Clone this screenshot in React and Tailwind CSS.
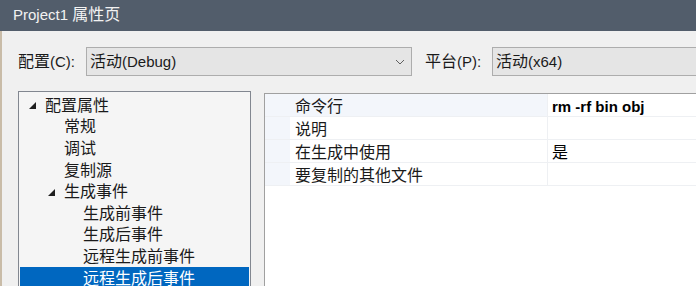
import React from 'react';

// CJK glyphs in the reference render a little larger than the Latin text
const Mix = ({ text }) => {
  const parts = text.split(/([\u3400-\u9fff]+)/).filter(Boolean);
  return (
    <span className="whitespace-pre">
      {parts.map((p, i) =>
        /[\u3400-\u9fff]/.test(p) ? (
          <span key={i} className="text-[16px]">{p}</span>
        ) : (
          <span key={i}>{p}</span>
        )
      )}
    </span>
  );
};

const Expander = () => (
  <svg width="7" height="7" viewBox="0 0 7 7" className="shrink-0">
    <polygon points="7,0 7,7 0,7" fill="#1e1e1e" />
  </svg>
);

const Chevron = () => (
  <svg width="10" height="6" viewBox="0 0 10 6">
    <polyline points="1,1 5,5 9,1" fill="none" stroke="#606060" strokeWidth="1" />
  </svg>
);

const treeItems = [
  { label: '配置属性', level: 0, expander: true },
  { label: '常规', level: 1 },
  { label: '调试', level: 1 },
  { label: '复制源', level: 1 },
  { label: '生成事件', level: 1, expander: true },
  { label: '生成前事件', level: 2 },
  { label: '生成后事件', level: 2 },
  { label: '远程生成前事件', level: 2 },
  { label: '远程生成后事件', level: 2, selected: true },
];

const props = [
  { name: '命令行', value: 'rm -rf bin obj', bold: true, focused: true },
  { name: '说明', value: '' },
  { name: '在生成中使用', value: '是' },
  { name: '要复制的其他文件', value: '' },
];

const indent = ['pl-[9px]', 'pl-[28px]', 'pl-[47px]'];
const textIndent = ['pl-[25px]', 'pl-[44px]', 'pl-[63px]'];

const App = () => {
  return (
    <div
      className="w-[696px] h-[286px] overflow-hidden flex flex-col bg-[#f0f0f0] text-[15px] text-[#1a1a1a]"
      style={{ fontFamily: '"Liberation Sans", "Noto Sans CJK SC", sans-serif' }}
    >
      <div className="h-[31px] shrink-0 bg-[#525d6b] flex items-center pl-[13px] pb-[2px] text-[#f2f2f2] leading-none">
        <Mix text="Project1 属性页" />
      </div>

      <div className="flex flex-1 min-h-0">
        <div className="w-[2px] shrink-0 bg-[#c9bca8]" />

        <div className="flex-1 flex flex-col pl-[16px] pt-[16px] min-w-0">
          <div className="flex items-center h-[29px]">
            <div className="w-[68px] shrink-0 leading-none pt-[1px]">
              <Mix text="配置(C):" />
            </div>
            <div className="w-[326px] h-[29px] shrink-0 border border-[#adadad] bg-[#e5e5e5] flex items-center justify-between pl-[3px] pr-[6px]">
              <span className="leading-none pt-[1px]"><Mix text="活动(Debug)" /></span>
              <Chevron />
            </div>
            <div className="w-[67px] shrink-0 ml-[13px] leading-none pt-[1px]">
              <Mix text="平台(P):" />
            </div>
            <div className="w-[260px] h-[29px] shrink-0 border border-[#adadad] bg-[#e5e5e5] flex items-center pl-[3px]">
              <span className="leading-none pt-[1px]"><Mix text="活动(x64)" /></span>
            </div>
          </div>

          <div className="flex flex-1 mt-[15px] min-h-0">
            <div className="w-[233px] shrink-0 border border-[#828790] border-b-0 bg-[#f5f5f5] pt-[2px] overflow-hidden">
              {treeItems.map((it) => (
                <div
                  key={it.label}
                  className={
                    'h-[21.6px] mx-[1px] flex items-center leading-none pt-[2px] ' +
                    (it.selected ? 'bg-[#0067c0] text-white' : '')
                  }
                >
                  {it.expander ? (
                    <div className={'flex items-center gap-[9px] ' + indent[it.level]}>
                      <Expander />
                      <Mix text={it.label} />
                    </div>
                  ) : (
                    <div className={textIndent[it.level]}>
                      <Mix text={it.label} />
                    </div>
                  )}
                </div>
              ))}
            </div>

            <div className="w-[500px] shrink-0 ml-[13px] mt-[2px] border border-[#a0a0a0] border-r-0 border-b-0 bg-white">
              {props.map((p) => (
                <div key={p.name} className="flex h-[23px] border-b border-[#eef0f3]">
                  <div className="w-[25px] shrink-0 bg-[#f3f6fb]" />
                  <div
                    className={
                      'w-[258px] shrink-0 flex items-center pl-[5px] pt-[3px] leading-none border-r border-[#eef0f3] ' +
                      (p.focused ? 'bg-[#f3f6fb]' : 'bg-white')
                    }
                  >
                    <Mix text={p.name} />
                  </div>
                  <div className={'flex-1 flex items-center pl-[4px] pt-[3px] leading-none text-black ' + (p.bold ? 'font-bold' : '')}>
                    <Mix text={p.value} />
                  </div>
                </div>
              ))}
            </div>
          </div>
        </div>
      </div>
    </div>
  );
};

export default App;
